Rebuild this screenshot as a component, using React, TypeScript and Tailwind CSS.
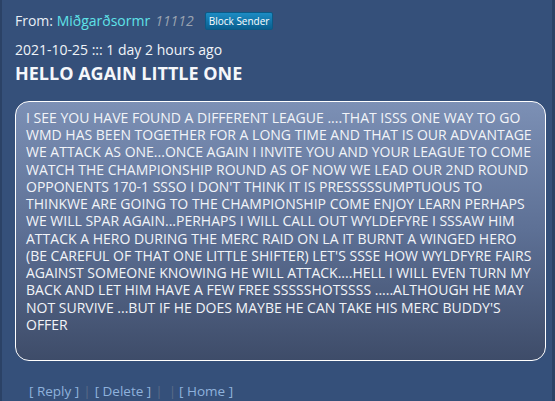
import React from "react";

const lines = [
  "I SEE YOU HAVE FOUND A DIFFERENT LEAGUE ....THAT ISSS ONE WAY TO GO",
  "WMD HAS BEEN TOGETHER FOR A LONG TIME AND THAT IS OUR ADVANTAGE",
  "WE ATTACK AS ONE...ONCE AGAIN I INVITE YOU AND YOUR LEAGUE TO COME",
  "WATCH THE CHAMPIONSHIP ROUND AS OF NOW WE LEAD OUR 2ND ROUND",
  "OPPONENTS 170-1 SSSO I DON'T THINK IT IS PRESSSSSUMPTUOUS TO",
  "THINKWE ARE GOING TO THE CHAMPIONSHIP COME ENJOY LEARN PERHAPS",
  "WE WILL SPAR AGAIN...PERHAPS I WILL CALL OUT WYLDEFYRE I SSSAW HIM",
  "ATTACK A HERO DURING THE MERC RAID ON LA IT BURNT A WINGED HERO",
  "(BE CAREFUL OF THAT ONE LITTLE SHIFTER) LET'S SSSE HOW WYLDFYRE FAIRS",
  "AGAINST SOMEONE KNOWING HE WILL ATTACK....HELL I WILL EVEN TURN MY",
  "BACK AND LET HIM HAVE A FEW FREE SSSSSHOTSSSS .....ALTHOUGH HE MAY",
  "NOT SURVIVE ...BUT IF HE DOES MAYBE HE CAN TAKE HIS MERC BUDDY'S",
  "OFFER",
];

export default function App() {
  return (
    <div className="w-[555px] h-[401px] overflow-hidden bg-[#35507a] flex font-['Open_Sans',sans-serif]">
      <div className="w-[2px] bg-[#2b4266]" />
      <div className="flex-1 flex flex-col pl-[13px] pr-[5px]">
        <div className="flex items-center mt-[10px] h-[22px]">
          <span className="text-[14px] text-[#e8eef6]">From:&nbsp;</span>
          <span className="text-[14px] text-[#5fe3e8]">Miðgarðsormr</span>
          <span className="text-[14px] italic text-[#9aa3b0] ml-[5px]">11112</span>
          <button className="ml-[11px] h-[18px] px-[3px] rounded-[2px] border border-[#0b5a86] bg-gradient-to-b from-[#1d8cc4] to-[#0a5f8f] text-white text-[10px] leading-none font-['Open_Sans',sans-serif]">
            Block Sender
          </button>
        </div>
        <div className="text-[14px] text-[#f0f4f8] mt-[9px] leading-[18px]">2021-10-25 ::: 1 day 2 hours ago</div>
        <div className="text-[18px] font-bold text-[#f5f7fa] leading-[22px] mt-[3px]">HELLO AGAIN LITTLE ONE</div>
        <div className="mt-[17px] w-[531px] h-[260px] rounded-[14px] border border-white bg-gradient-to-b from-[#7c90b5] via-[#5d7095] to-[#3e4c69] pl-[10px] pt-[7px]">
          {lines.map((l, i) => (
            <div key={i} className="whitespace-nowrap text-[14px] leading-[17.25px] text-[#f2f4f8]">
              {l}
            </div>
          ))}
        </div>
        <div className="mt-[20px] ml-[14px] text-[13.5px] text-[#8fb2dc] flex items-center">
          <span>[ Reply ]</span>
          <span className="text-[#5a6c88] mx-[4px]">|</span>
          <span>[ Delete ]</span>
          <span className="text-[#5a6c88] ml-[4px]">|</span>
          <span className="text-[#5a6c88] ml-[6px] mr-[3px]">|</span>
          <span>[ Home ]</span>
        </div>
      </div>
      <div className="w-[3px] bg-[#2b4266]" />
    </div>
  );
}
